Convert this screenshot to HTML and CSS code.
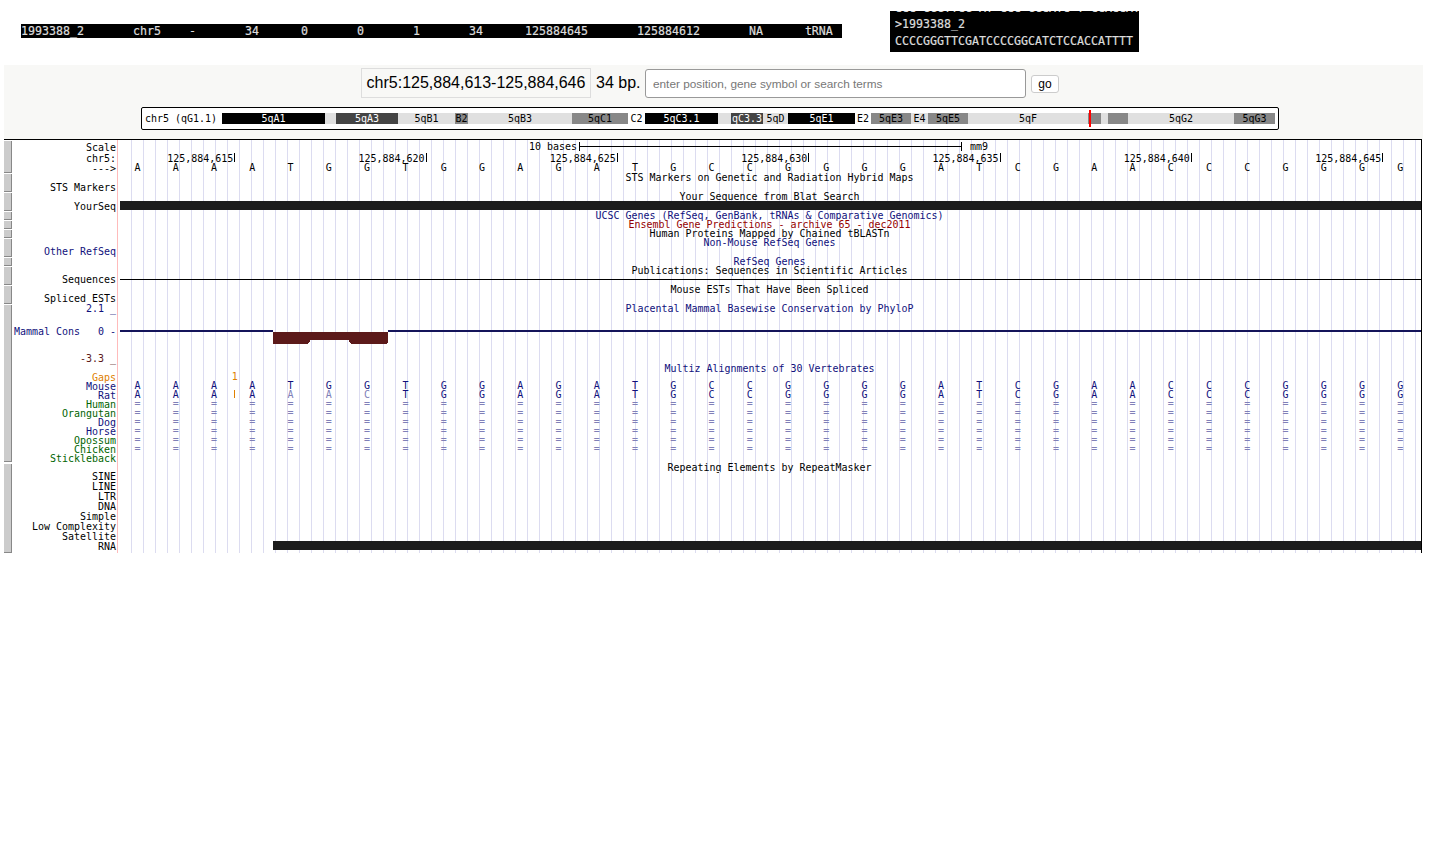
FILE: index.html
```html
<!DOCTYPE html>
<html lang="en">
<head>
  <meta charset="UTF-8">
  <title>UCSC Genome Browser</title>
  <link rel="stylesheet" href="styles.css">
</head>
<body>

<div class="results">
  <pre class="hit">1993388_2	chr5	-	34	0	0	1	34	125884645	125884612	NA	tRNA</pre>
  <pre class="fasta"><span class="cut">CCC GGGTTCG AT CCC GGCATC T CCACCAT T</span>&gt;1993388_2
CCCCGGGTTCGATCCCCGGCATCTCCACCATTTT</pre>
</div>

<div class="nav">
  <div class="search">
    <span class="pos">chr5:125,884,613-125,884,646</span>
    <span class="size">34 bp.</span>
    <input class="term" type="text" placeholder="enter position, gene symbol or search terms">
    <button class="go">go</button>
  </div>
  <div class="ideogram">
    <span class="chrom">chr5 (qG1.1)</span>
    <div class="bands">
      <span class="band k" style="width:103px">5qA1</span>
      <span class="band l" style="width:11px"></span>
      <span class="band d" style="width:62px">5qA3</span>
      <span class="band l" style="width:57px">5qB1</span>
      <span class="band g" style="width:13px">B2</span>
      <span class="band l" style="width:104px">5qB3</span>
      <span class="band g" style="width:56px">5qC1</span>
      <span class="band w" style="width:17px">C2</span>
      <span class="band k" style="width:73px">5qC3.1</span>
      <span class="band l" style="width:13px"></span>
      <span class="band d" style="width:32px">qC3.3</span>
      <span class="band l" style="width:25px">5qD</span>
      <span class="band k" style="width:67px">5qE1</span>
      <span class="band w" style="width:16px">E2</span>
      <span class="band g" style="width:40px">5qE3</span>
      <span class="band l" style="width:17px">E4</span>
      <span class="band g" style="width:40px">5qE5</span>
      <span class="band l" style="width:120px">5qF</span>
      <span class="band g here" style="width:13px"></span>
      <span class="band l" style="width:7px"></span>
      <span class="band g" style="width:20px"></span>
      <span class="band l" style="width:106px">5qG2</span>
      <span class="band g" style="width:41px">5qG3</span>
    </div>
  </div>
</div>

<div class="browser">
  <div class="side">
    <span class="btn" style="height:32px"></span>
    <span class="btn" style="height:18px"></span>
    <span class="btn" style="height:18px"></span>
    <span class="btn" style="height:8px"></span>
    <span class="btn" style="height:8px"></span>
    <span class="btn" style="height:8px"></span>
    <span class="btn" style="height:18px"></span>
    <span class="btn" style="height:8px"></span>
    <span class="btn" style="height:18px"></span>
    <span class="btn" style="height:18px"></span>
    <span class="btn" style="height:157px"></span>
    <span class="btn last" style="height:89px"></span>
  </div>

  <div class="tracks" id="tracks">
    <div class="row h13"><div class="label">Scale</div>
      <div class="track scale"><span>10 bases</span><i class="ruler"></i><span>mm9</span></div></div>
    <div class="row h10"><div class="label">chr5:</div>
      <div class="track bases coords">
        <span class="first">125,884,615</span><span>125,884,620</span><span>125,884,625</span><span>125,884,630</span><span>125,884,635</span><span>125,884,640</span><span>125,884,645</span>
      </div></div>
    <div class="row h9"><div class="label">---&gt;</div><div class="track bases" data-seq="AAAATGGTGGAGATGCCGGGGATCGAACCCGGGG"></div></div>
    <div class="row h10"><div class="label"></div><div class="track title">STS Markers on Genetic and Radiation Hybrid Maps</div></div>
    <div class="row h9"><div class="label">STS Markers</div><div class="track"></div></div>
    <div class="row h10"><div class="label"></div><div class="track title">Your Sequence from Blat Search</div></div>
    <div class="row h9"><div class="label">YourSeq</div><div class="track"><div class="block"></div></div></div>
    <div class="row h9"><div class="label"></div><div class="track title navy">UCSC Genes (RefSeq, GenBank, tRNAs &amp; Comparative Genomics)</div></div>
    <div class="row h9"><div class="label"></div><div class="track title red">Ensembl Gene Predictions - archive 65 - dec2011</div></div>
    <div class="row h9"><div class="label"></div><div class="track title">Human Proteins Mapped by Chained tBLASTn</div></div>
    <div class="row h9"><div class="label"></div><div class="track title navy">Non-Mouse RefSeq Genes</div></div>
    <div class="row h10"><div class="label navy">Other RefSeq</div><div class="track"></div></div>
    <div class="row h9"><div class="label"></div><div class="track title navy">RefSeq Genes</div></div>
    <div class="row h9"><div class="label"></div><div class="track title">Publications: Sequences in Scientific Articles</div></div>
    <div class="row h10"><div class="label">Sequences</div><div class="track"><div class="hline"></div></div></div>
    <div class="row h9"><div class="label"></div><div class="track title">Mouse ESTs That Have Been Spliced</div></div>
    <div class="row h10"><div class="label">Spliced ESTs</div><div class="track"></div></div>
    <div class="row h10"><div class="label navy">2.1 _</div><div class="track title navy">Placental Mammal Basewise Conservation by PhyloP</div></div>

    <div class="row h50">
      <div class="label wig-label">
        <div class="wig-mid navy"><span>Mammal Cons</span><span>0 -</span></div>
        <div class="wig-low brown">-3.3 _</div>
      </div>
      <div class="track">
        <svg class="wiggle" width="1303" height="50" viewBox="0 0 1303 50">
          <path fill="#14145a" d="M2 17h153v2H2zM270 17h1033v2H270z"/>
          <path fill="#5c1a1a" d="M155 19h115v11h-1v1h-36v-1h-1v-1h-1v-2h-39v2h-1v1h-1v1h-35z"/>
        </svg>
      </div>
    </div>

    <div class="row h9"><div class="label"></div><div class="track title navy">Multiz Alignments of 30 Vertebrates</div></div>
    <div class="row h9"><div class="label orange">Gaps</div><div class="track bases orange"><span class="gap">1</span></div></div>
    <div class="row h9"><div class="label navy">Mouse</div><div class="track bases navy" data-seq="AAAATGGTGGAGATGCCGGGGATCGAACCCGGGG"></div></div>
    <div class="row h9"><div class="label navy">Rat</div><div class="track bases navy" id="rat" data-seq="AAAAAACTGGAGATGCCGGGGATCGAACCCGGGG"></div></div>
    <div class="row h9"><div class="label green">Human</div><div class="track bases same" data-same></div></div>
    <div class="row h9"><div class="label green">Orangutan</div><div class="track bases same" data-same></div></div>
    <div class="row h9"><div class="label navy">Dog</div><div class="track bases same" data-same></div></div>
    <div class="row h9"><div class="label navy">Horse</div><div class="track bases same" data-same></div></div>
    <div class="row h9"><div class="label green">Opossum</div><div class="track bases same" data-same></div></div>
    <div class="row h9"><div class="label green">Chicken</div><div class="track bases same" data-same></div></div>
    <div class="row h9"><div class="label green">Stickleback</div><div class="track"></div></div>
    <div class="row h9"><div class="label"></div><div class="track title">Repeating Elements by RepeatMasker</div></div>
    <div class="row h10"><div class="label">SINE</div><div class="track"></div></div>
    <div class="row h10"><div class="label">LINE</div><div class="track"></div></div>
    <div class="row h10"><div class="label">LTR</div><div class="track"></div></div>
    <div class="row h10"><div class="label">DNA</div><div class="track"></div></div>
    <div class="row h10"><div class="label">Simple</div><div class="track"></div></div>
    <div class="row h10"><div class="label">Low Complexity</div><div class="track"></div></div>
    <div class="row h10"><div class="label">Satellite</div><div class="track"></div></div>
    <div class="row h10"><div class="label">RNA</div><div class="track"><div class="block rna"></div></div></div>
    <div class="row h2"><div class="label"></div><div class="track"></div></div>
  </div>
</div>

<script>
  // fill the per-base rows, 34 columns each
  document.querySelectorAll('[data-seq]').forEach(function(row) {
    row.dataset.seq.split('').forEach(function(base) {
      const cell = document.createElement('span');
      cell.textContent = base;
      row.appendChild(cell);
    });
  });

  document.querySelectorAll('[data-same]').forEach(function(row) {
    for (let i = 0; i < 34; i++) {
      const cell = document.createElement('span');
      cell.textContent = '=';
      row.appendChild(cell);
    }
  });

  // rat: three bases differ from mouse, and an insert before the fourth
  const rat = document.getElementById('rat').children;
  for (let i = 4; i < 7; i++) {
    rat[i].className = 'faint';
  }
  rat[3].className = 'has-insert';
</script>

</body>
</html>
```

FILE: styles.css
```css
body {
  margin: 0;
  background: #fff;
  color: #000;
  font-family: "Liberation Sans", Arial, sans-serif;
}

/* blat result lines */
.results {
  display: flex;
  align-items: flex-start;
  height: 65px;
}

.hit,
.fasta {
  margin: 0;
  background: #000;
  color: #ddd;
  font-family: "DejaVu Sans Mono", monospace;
  font-size: 11.63px;
  -webkit-text-stroke: .2px #ddd;
  tab-size: 8;
  overflow: hidden;
}

.hit {
  margin: 24px 0 0 21px;
  width: 821px;
  height: 14px;
  line-height: 14px;
}

.fasta {
  margin: 11px 0 0 48px;
  padding: 0 5px;
  width: 239px;
  height: 41px;
  line-height: 17px;
}

.cut {
  display: block;
  height: 17px;
  margin-top: -12px;
  line-height: 18px;
}

/* position bar */
.nav {
  margin: 0 13px 0 4px;
  height: 74px;
  background: #f8f8f6;
  overflow: hidden;
}

.search {
  display: flex;
  align-items: flex-start;
  margin: 3px 0 0 357px;
  height: 39px;
}

.pos {
  box-sizing: border-box;
  width: 230px;
  height: 30px;
  border: 1px solid #ddd;
  text-align: center;
  font-size: 16px;
  line-height: 28px;
}

.size {
  margin-left: 5px;
  width: 49px;
  font-size: 16px;
  line-height: 30px;
}

.term {
  box-sizing: border-box;
  width: 381px;
  height: 29px;
  margin: 1px 0 0 0;
  padding: 0 7px;
  border: 1px solid #999;
  border-radius: 3px;
  background: #fff;
  font-family: "Liberation Sans", Arial, sans-serif;
  font-size: 11.8px;
}

.term::placeholder {
  color: #777;
}

.go {
  box-sizing: border-box;
  width: 28px;
  height: 18px;
  margin: 7px 0 0 5px;
  padding: 0;
  border: 1px solid #ccc;
  border-radius: 3px;
  background: #fff;
  font-family: "Liberation Sans", Arial, sans-serif;
  font-size: 12px;
  line-height: 16px;
}

.ideogram {
  box-sizing: border-box;
  display: flex;
  align-items: center;
  width: 1138px;
  height: 23px;
  margin-left: 137px;
  padding-left: 3px;
  border: 1px solid #000;
  border-radius: 2px;
  background: #fff;
  font-family: "DejaVu Sans Mono", monospace;
  font-size: 9.97px;
}

.chrom {
  width: 77px;
  flex: none;
}

.bands {
  display: flex;
  height: 11px;
}

.band {
  position: relative;
  flex: none;
  overflow: visible;
  text-align: center;
  line-height: 11px;
  white-space: nowrap;
}

.band.k { background: #000; color: #fff; }
.band.d { background: #444; color: #fff; }
.band.g { background: #888; color: #000; }
.band.l { background: #e0e0e0; color: #000; }
.band.w { background: #fff; color: #000; }

.here::after {
  content: "";
  position: absolute;
  left: 1px;
  top: -3px;
  width: 2px;
  height: 17px;
  background: #f00;
}

/* tracks image */
.browser {
  display: flex;
  box-sizing: border-box;
  width: 1418px;
  margin-left: 4px;
  border-top: 1px solid #000;
  border-right: 1px solid #000;
  font-family: "DejaVu Sans Mono", monospace;
  font-size: 9.97px;
}

.side {
  display: flex;
  flex-direction: column;
  width: 8px;
  flex: none;
  gap: 1px;
  padding-top: 1px;
}

.btn {
  box-sizing: border-box;
  display: block;
  flex: none;
  background: #ccc;
  border-right: 1px solid #888;
  border-bottom: 1px solid #888;
}

.btn.last {
  margin-top: 1px;
}

.tracks {
  flex: 1;
}

.row {
  display: flex;
}

/* line boxes run 2px over the row: drops the text 1px like the original */
.h2 { height: 2px; }
.h9 { height: 9px; line-height: 11px; }
.h10 { height: 10px; line-height: 12px; }
.h13 { height: 13px; line-height: 15px; }
.h50 { height: 50px; }

.label {
  box-sizing: border-box;
  width: 106px;
  flex: none;
  padding-right: 1px;
  border-right: 1px solid #fbb;
  text-align: right;
}

.track {
  flex: 1;
  min-width: 0;
  background:
    linear-gradient(#fff, #fff) 0 0 / 2px 100% no-repeat,
    linear-gradient(90deg, transparent 11px, #dcdcf0 11px) 2px 0 / 12px 100%;
}

.title {
  text-align: center;
}

.navy { color: #10107c; }
.red { color: #960000; }
.green { color: #006400; }
.orange { color: #e08000; }
.brown { color: #5c1a1a; }

.scale {
  display: flex;
  align-items: center;
  padding-left: 411px;
  padding-bottom: 1px;
  box-sizing: border-box;
}

.ruler {
  display: block;
  box-sizing: border-box;
  width: 383px;
  height: 9px;
  margin: 0 8px 0 2px;
  border-left: 1px solid #000;
  border-right: 1px solid #000;
  background: linear-gradient(#000, #000) center / 100% 1px no-repeat;
}

.bases {
  display: grid;
  grid-template-columns: repeat(34, 38.27px);
  padding-left: .4px;
  text-align: center;
  line-height: 10px;
}

.same,
.faint {
  color: #8080b8;
}

.gap {
  grid-column: 3 / span 2;
  padding-left: 3px;
}

.has-insert {
  position: relative;
}

.has-insert::before {
  content: "";
  position: absolute;
  left: .6px;
  top: 0;
  width: 1px;
  height: 8px;
  background: #e08000;
}

.coords span {
  grid-column: span 5;
  margin-right: -2px;
  padding-right: 1px;
  border-right: 1px solid #000;
  text-align: right;
  line-height: 11px;
  height: 9px;
}

.coords .first {
  grid-column: span 3;
}

.block {
  height: 9px;
  margin-left: 2px;
  background: #1c1c1c;
}

.rna {
  margin-left: 155px;
}

.hline {
  height: 1px;
  margin: 5px 0 0 2px;
  background: #000;
}

.wig-label {
  padding-top: 13px;
}

.wig-mid {
  display: flex;
  justify-content: space-between;
  padding-left: 2px;
  height: 10px;
  line-height: 12px;
}

.wig-low {
  margin-top: 17px;
  height: 10px;
  line-height: 12px;
}

.wiggle {
  display: block;
}
```
